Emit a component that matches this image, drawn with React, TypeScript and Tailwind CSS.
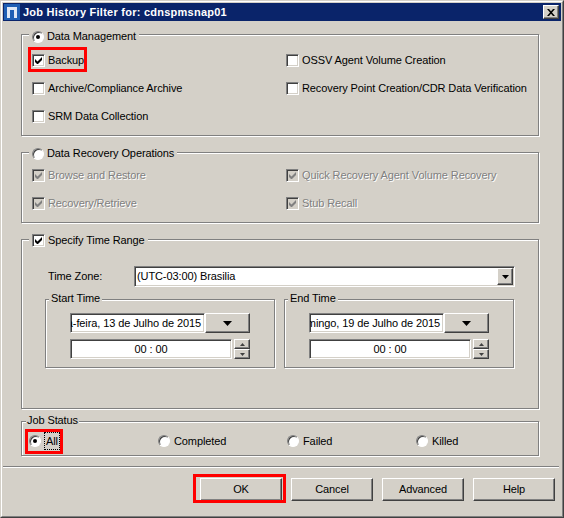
import type { ReactNode } from "react";

const sunken =
  "border border-t-[#808080] border-l-[#808080] border-b-white border-r-white shadow-[inset_1px_1px_0_#404040,inset_-1px_-1px_0_#d4d0c8]";
const raised =
  "border border-t-white border-l-white border-b-[#404040] border-r-[#404040] shadow-[inset_-1px_-1px_0_#808080]";
const dimText = "text-[#808080] [text-shadow:1px_1px_0_#fff]";

function Check({ checked, disabled }: { checked?: boolean; disabled?: boolean }) {
  return (
    <span
      className={`inline-flex h-[13px] w-[13px] shrink-0 items-center justify-center ${sunken} ${
        disabled ? "bg-[#d4d0c8]" : "bg-white"
      }`}
    >
      {checked && (
        <svg width="7" height="7" viewBox="0 0 7 7">
          <polygon points="0,2 2.5,4.5 7,0 7,3 2.5,7.5 0,5" fill={disabled ? "#808080" : "#000"} />
        </svg>
      )}
    </span>
  );
}

function Radio({ on }: { on?: boolean }) {
  return (
    <span className="inline-flex h-[12px] w-[12px] shrink-0 items-center justify-center rounded-full border border-t-[#808080] border-l-[#808080] border-b-white border-r-white bg-white shadow-[inset_1px_1px_0_#404040]">
      {on && <span className="h-[4px] w-[4px] rounded-full bg-black" />}
    </span>
  );
}

function CheckItem({ label, checked, disabled }: { label: string; checked?: boolean; disabled?: boolean }) {
  return (
    <div className="flex h-[28px] items-center gap-[3px]">
      <Check checked={checked} disabled={disabled} />
      <span className={disabled ? dimText : ""}>{label}</span>
    </div>
  );
}

function Group({
  label,
  labelTop,
  className,
  children,
}: {
  label: ReactNode;
  labelTop: string;
  className: string;
  children?: ReactNode;
}) {
  return (
    <div className={`relative border border-[#808080] shadow-[1px_1px_0_#fff,inset_1px_1px_0_#fff] ${className}`}>
      <div className={`absolute flex h-[13px] items-center gap-[3px] bg-[#d4d0c8] ${labelTop}`}>{label}</div>
      {children}
    </div>
  );
}

function Spinner() {
  return (
    <div className="flex h-[20px] w-[16px] flex-col">
      <div className={`flex flex-1 items-center justify-center bg-[#d4d0c8] ${raised}`}>
        <svg width="5" height="3" viewBox="0 0 5 3">
          <path d="M2.5 0L5 3H0z" fill="#404040" />
        </svg>
      </div>
      <div className={`flex flex-1 items-center justify-center bg-[#d4d0c8] ${raised}`}>
        <svg width="5" height="3" viewBox="0 0 5 3">
          <path d="M0 0h5L2.5 3z" fill="#404040" />
        </svg>
      </div>
    </div>
  );
}

function TimeBlock({ title, date }: { title: string; date: string }) {
  return (
    <Group label={<span>{title}</span>} labelTop="-top-[8px] left-[3px] px-[2px]" className="h-[69px] w-[230px]">
      <div className="flex flex-col gap-[6px] pl-[24px] pt-[13px]">
        <div className="flex">
          <div
            className={`flex h-[20px] w-[135px] items-center justify-end overflow-hidden whitespace-nowrap bg-white pr-[3px] ${sunken}`}
          >
            {date}
          </div>
          <div className={`flex h-[20px] w-[45px] items-center justify-center bg-[#d4d0c8] ${raised}`}>
            <svg width="9" height="5" viewBox="0 0 9 5">
              <path d="M0 0h9L4.5 5z" fill="#000" />
            </svg>
          </div>
        </div>
        <div className="flex gap-[2px]">
          <div className={`flex h-[20px] w-[162px] items-center justify-center bg-white ${sunken}`}>00 : 00</div>
          <Spinner />
        </div>
      </div>
    </Group>
  );
}

const management = [
  { label: "Backup", checked: true },
  { label: "OSSV Agent Volume Creation" },
  { label: "Archive/Compliance Archive" },
  { label: "Recovery Point Creation/CDR Data Verification" },
  { label: "SRM Data Collection" },
];

const recovery = ["Browse and Restore", "Quick Recovery Agent Volume Recovery", "Recovery/Retrieve", "Stub Recall"];

const statuses = ["All", "Completed", "Failed", "Killed"];

export default function App() {
  return (
    <div className="relative h-[518px] w-[564px] border border-t-[#d4d0c8] border-l-[#d4d0c8] border-b-[#404040] border-r-[#404040] bg-[#d4d0c8] text-[11px] tracking-[-0.1px] text-black [font-family:'Liberation_Sans',Arial,sans-serif]">
      <div className="h-full border border-t-white border-l-white border-b-[#808080] border-r-[#808080] p-[1px]">
        {/* Title bar */}
        <div className="flex h-[18px] items-center bg-[#0a246a] pl-[1px] pr-[2px]">
          <svg width="16" height="16" viewBox="0 0 16 16">
            <rect width="16" height="16" fill="#1f5fb4" />
            <path d="M3 14V3h10v11h-3V6H6v8z" fill="#dfe8f5" />
          </svg>
          <span className="ml-[3px] text-[11px] font-bold tracking-[0.25px] text-white">
            Job History Filter for: cdnspmsnap01
          </span>
          <div className={`ml-auto flex h-[14px] w-[16px] items-center justify-center bg-[#d4d0c8] ${raised}`}>
            <svg width="8" height="7" viewBox="0 0 8 7">
              <path d="M0 0h2l2 2.3L6 0h2L5 3.5 8 7H6L4 4.7 2 7H0l3-3.5z" fill="#000" />
            </svg>
          </div>
        </div>

        <div className="flex flex-col">
          {/* Data Management */}
          <Group
            label={
              <>
                <Radio on />
                <span>Data Management</span>
              </>
            }
            labelTop="-top-[5px] left-[7px] px-[3px]"
            className="ml-[18px] mt-[13px] h-[102px] w-[518px]"
          >
            <div className="grid grid-cols-[254px_1fr] pl-[10px] pt-[11px]">
              {management.map((m) => (
                <CheckItem key={m.label} label={m.label} checked={m.checked} />
              ))}
            </div>
          </Group>

          {/* Data Recovery Operations */}
          <Group
            label={
              <>
                <Radio />
                <span>Data Recovery Operations</span>
              </>
            }
            labelTop="-top-[6px] left-[7px] px-[3px]"
            className="ml-[18px] mt-[16px] h-[71px] w-[518px]"
          >
            <div className="grid grid-cols-[254px_1fr] pl-[10px] pt-[8px]">
              {recovery.map((r) => (
                <CheckItem key={r} label={r} checked disabled />
              ))}
            </div>
          </Group>

          {/* Specify Time Range */}
          <Group
            label={
              <>
                <Check checked />
                <span>Specify Time Range</span>
              </>
            }
            labelTop="-top-[6px] left-[7px] px-[3px]"
            className="ml-[18px] mt-[16px] h-[170px] w-[518px]"
          >
            <div className="flex items-center pl-[26px] pt-[26px]">
              <span className="w-[86px]">Time Zone:</span>
              <div className={`flex h-[21px] w-[381px] items-center bg-white p-[1px] ${sunken}`}>
                <span className="flex-1 pl-[1px]">(UTC-03:00) Brasilia</span>
                <div className={`flex h-full w-[16px] items-center justify-center bg-[#d4d0c8] ${raised}`}>
                  <svg width="7" height="4" viewBox="0 0 7 4">
                    <path d="M0 0h7L3.5 4z" fill="#000" />
                  </svg>
                </div>
              </div>
            </div>
            <div className="mt-[12px] flex gap-[9px] pl-[23px]">
              <TimeBlock title="Start Time" date="segunda-feira, 13 de Julho de 2015" />
              <TimeBlock title="End Time" date="domingo, 19 de Julho de 2015" />
            </div>
          </Group>

          {/* Job Status */}
          <Group
            label={<span>Job Status</span>}
            labelTop="-top-[8px] left-[4px] px-[1px]"
            className="ml-[18px] mt-[12px] h-[35px] w-[518px]"
          >
            <div className="grid grid-cols-[129px_129px_129px_1fr] pl-[7px] pt-[9px]">
              {statuses.map((s, i) => (
                <div key={s} className="flex h-[20px] items-center gap-[4px]">
                  <Radio on={i === 0} />
                  {i === 0 ? (
                    <span className="px-[1px] outline-1 outline-dotted outline-black">{s}</span>
                  ) : (
                    <span>{s}</span>
                  )}
                </div>
              ))}
            </div>
          </Group>

          {/* Separator */}
          <div className="mt-[10px] h-[2px] w-[556px] border-t border-t-[#808080] border-b border-b-white" />

          {/* Buttons */}
          <div className="mt-[10px] flex justify-end gap-[9px] pr-[6px]">
            {["OK", "Cancel", "Advanced", "Help"].map((b) => (
              <div key={b} className={`flex h-[23px] w-[82px] items-center justify-center bg-[#d4d0c8] ${raised}`}>
                {b}
              </div>
            ))}
          </div>
        </div>
      </div>

      {/* Red annotation boxes */}
      <div className="absolute left-[27px] top-[46px] h-[25px] w-[59px] border-[3px] border-[#ff0000]" />
      <div className="absolute left-[24px] top-[428px] h-[25px] w-[38px] border-[3px] border-[#ff0000]" />
      <div className="absolute left-[192px] top-[473px] h-[29px] w-[93px] border-[3px] border-[#ff0000]" />
    </div>
  );
}
